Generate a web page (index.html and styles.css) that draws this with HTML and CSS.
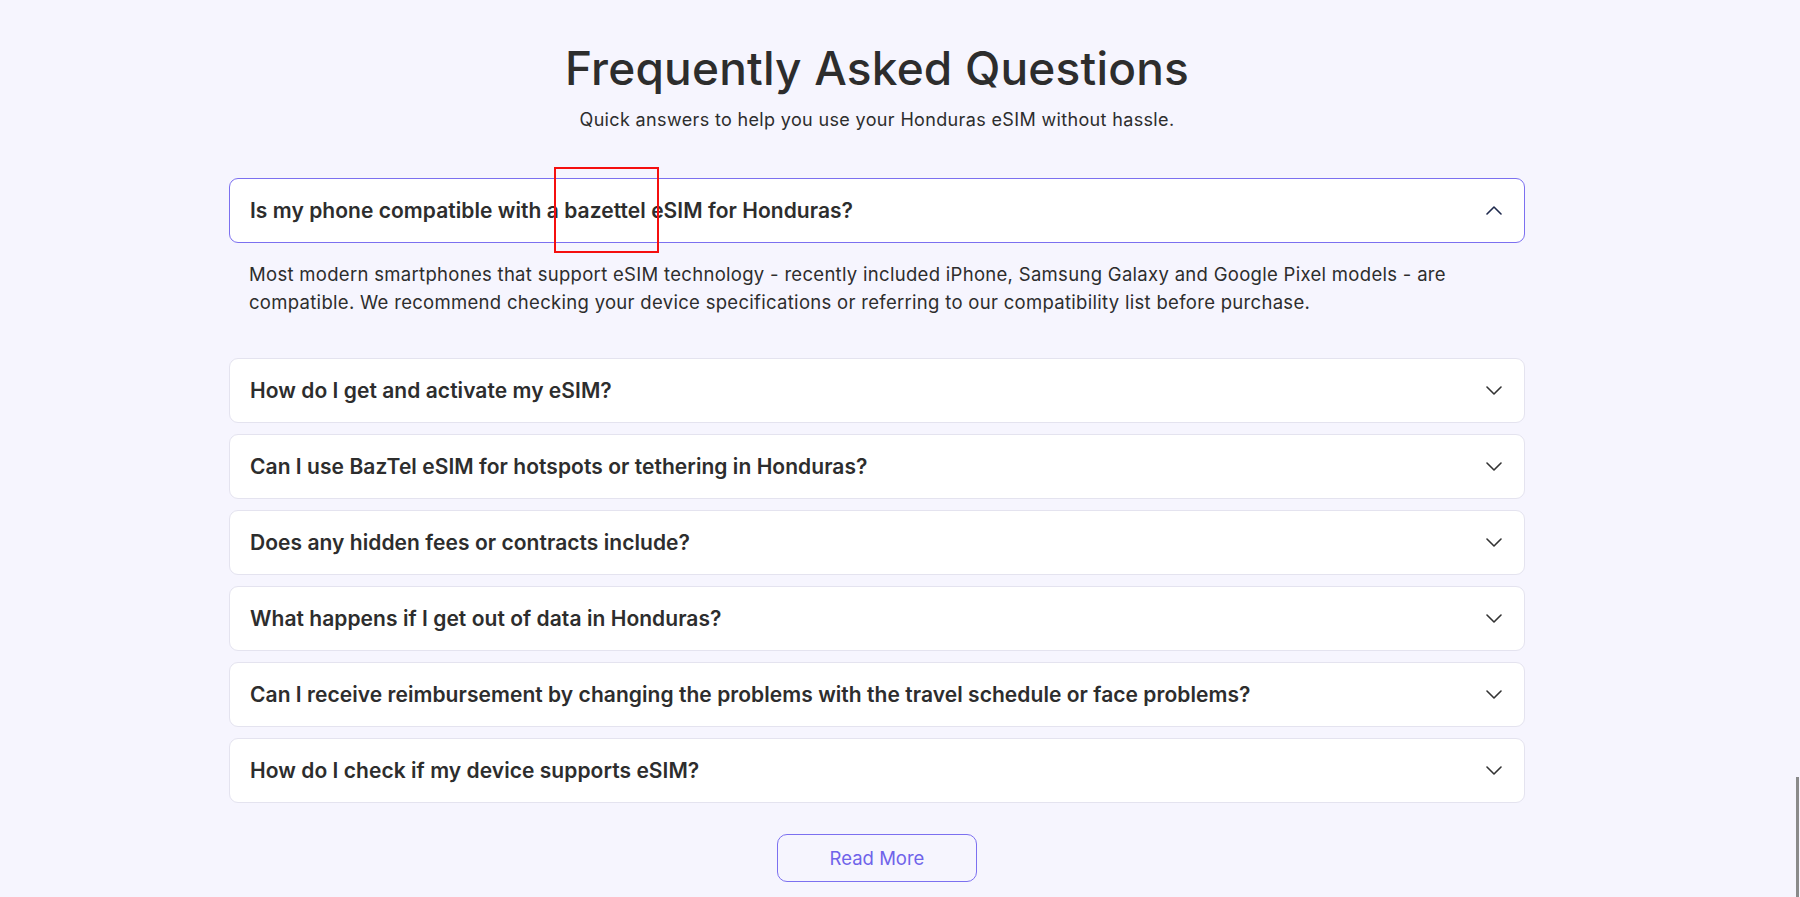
FILE: index.html
```html
<!DOCTYPE html>
<html lang="en">
<head>
<meta charset="utf-8">
<title>FAQ</title>
<link rel="stylesheet" href="styles.css">
</head>
<body>
<div class="page">
  <section class="faq">
    <h1 class="faq-title">Frequently Asked Questions</h1>
    <p class="faq-sub">Quick answers to help you use your Honduras eSIM without hassle.</p>
    <div class="faq-list">
      <div class="item open">
        <div class="q">
          <span>Is my phone compatible with a bazettel eSIM for Honduras?</span>
          <svg class="chev up" viewBox="0 0 16 9" width="16" height="9"><path d="M1 8 L8 1 L15 8" fill="none" stroke="currentColor" stroke-width="1.6" stroke-linecap="round" stroke-linejoin="round"/></svg>
        </div>
      </div>
      <div class="answer">Most modern smartphones that support eSIM technology - recently included iPhone, Samsung Galaxy and Google Pixel models - are compatible. We recommend checking your device specifications or referring to our compatibility list before purchase.</div>
      <div class="item">
        <div class="q">
          <span>How do I get and activate my eSIM?</span>
          <svg class="chev" viewBox="0 0 16 9" width="16" height="9"><path d="M1 1 L8 8 L15 1" fill="none" stroke="currentColor" stroke-width="1.6" stroke-linecap="round" stroke-linejoin="round"/></svg>
        </div>
      </div>
      <div class="item">
        <div class="q">
          <span>Can I use BazTel eSIM for hotspots or tethering in Honduras?</span>
          <svg class="chev" viewBox="0 0 16 9" width="16" height="9"><path d="M1 1 L8 8 L15 1" fill="none" stroke="currentColor" stroke-width="1.6" stroke-linecap="round" stroke-linejoin="round"/></svg>
        </div>
      </div>
      <div class="item">
        <div class="q">
          <span>Does any hidden fees or contracts include?</span>
          <svg class="chev" viewBox="0 0 16 9" width="16" height="9"><path d="M1 1 L8 8 L15 1" fill="none" stroke="currentColor" stroke-width="1.6" stroke-linecap="round" stroke-linejoin="round"/></svg>
        </div>
      </div>
      <div class="item">
        <div class="q">
          <span>What happens if I get out of data in Honduras?</span>
          <svg class="chev" viewBox="0 0 16 9" width="16" height="9"><path d="M1 1 L8 8 L15 1" fill="none" stroke="currentColor" stroke-width="1.6" stroke-linecap="round" stroke-linejoin="round"/></svg>
        </div>
      </div>
      <div class="item">
        <div class="q">
          <span>Can I receive reimbursement by changing the problems with the travel schedule or face problems?</span>
          <svg class="chev" viewBox="0 0 16 9" width="16" height="9"><path d="M1 1 L8 8 L15 1" fill="none" stroke="currentColor" stroke-width="1.6" stroke-linecap="round" stroke-linejoin="round"/></svg>
        </div>
      </div>
      <div class="item">
        <div class="q">
          <span>How do I check if my device supports eSIM?</span>
          <svg class="chev" viewBox="0 0 16 9" width="16" height="9"><path d="M1 1 L8 8 L15 1" fill="none" stroke="currentColor" stroke-width="1.6" stroke-linecap="round" stroke-linejoin="round"/></svg>
        </div>
      </div>
    </div>
    <div class="more-wrap"><button class="more">Read More</button></div>
  </section>
</div>
<div class="highlight"></div>
<div class="scroll-thumb"></div>
</body>
</html>
```
FILE: styles.css
```css
html, body {
  margin: 0;
  padding: 0;
}
body {
  background: #f6f5fe;
  font-family: "Inter", "Open Sans", sans-serif;
  color: #2d2d2d;
  overflow: hidden;
  height: 897px;
}
.page {
  width: 1754px;
}
.faq {
  width: 1296px;
  margin: 0 auto;
  padding-top: 40px;
}
.faq-title {
  margin: 0;
  text-align: center;
  font-size: 46px;
  line-height: 56px;
  font-weight: 500;
  color: #2d2d2d;
  letter-spacing: 0.2px;
}
.faq-sub {
  margin: 11px 0 0;
  text-align: center;
  font-size: 18px;
  line-height: 26px;
  letter-spacing: 0.35px;
  color: #2d2d2d;
}
.faq-list {
  margin-top: 45px;
  display: flex;
  flex-direction: column;
}
.item {
  background: #fff;
  border: 1px solid #e4e3ef;
  border-radius: 9px;
  margin-bottom: 11px;
}
.item.open {
  border-color: #7c70f0;
  margin-bottom: 0;
}
.q {
  height: 63px;
  display: flex;
  align-items: center;
  justify-content: space-between;
  padding: 0 22px 0 20px;
  font-size: 21px;
  font-weight: 600;
  letter-spacing: 0.05px;
  color: #2d2d2d;
}
.chev {
  color: #333;
  flex: none;
}
.chev.up {
  color: #1f2a4d;
}
.answer {
  padding: 18px 20px 31px;
  font-size: 18.5px;
  line-height: 27.5px;
  letter-spacing: 0.3px;
  color: #2d2d2d;
  margin-bottom: 11px;
}
.more-wrap {
  display: flex;
  justify-content: center;
  margin-top: 20px;
}
.more {
  width: 200px;
  height: 48px;
  border: 1px solid #7c70f0;
  border-radius: 10px;
  background: transparent;
  color: #6f63ea;
  font-family: "Inter", "Open Sans", sans-serif;
  font-size: 18.5px;
  font-weight: 400;
}
.highlight {
  position: absolute;
  left: 554px;
  top: 167px;
  width: 101px;
  height: 82px;
  border: 2px solid #f50f0f;
}
.scroll-thumb {
  position: fixed;
  left: 1796px;
  top: 777px;
  width: 3px;
  height: 120px;
  background: #8a8a8a;
}
```
